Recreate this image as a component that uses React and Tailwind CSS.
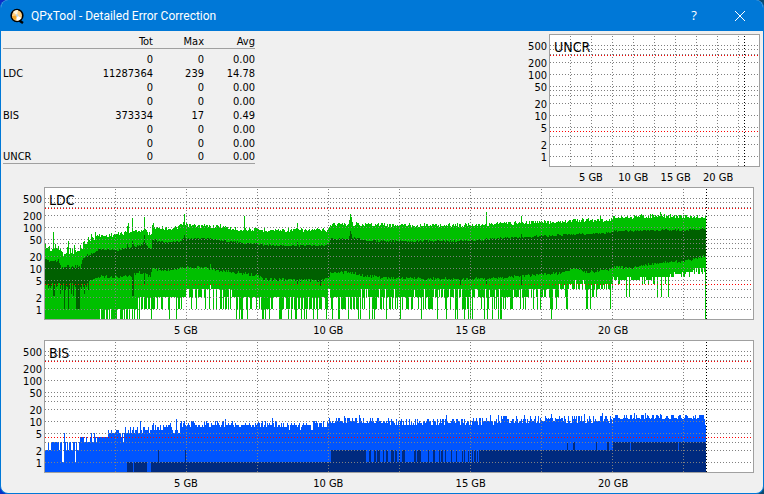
import React from 'react';

const STATS = [
  { name: '', tot: '0', max: '0', avg: '0.00' },
  { name: 'LDC', tot: '11287364', max: '239', avg: '14.78' },
  { name: '', tot: '0', max: '0', avg: '0.00' },
  { name: '', tot: '0', max: '0', avg: '0.00' },
  { name: 'BIS', tot: '373334', max: '17', avg: '0.49' },
  { name: '', tot: '0', max: '0', avg: '0.00' },
  { name: '', tot: '0', max: '0', avg: '0.00' },
  { name: 'UNCR', tot: '0', max: '0', avg: '0.00' }
];

// Plot geometry
const PLOT_H = 131;
const DISC_GB = 24.93;
const END_GB = 23.3;
const SAMPLES = 661;
const GRID_LEVELS = [1, 2, 3, 5, 10, 20, 30, 40, 50, 100, 200, 300, 400, 500];
const AXIS_LEVELS = [1, 2, 5, 10, 20, 50, 100, 200, 500];
const GRID_GB = [2.5, 5, 7.5, 10, 12.5, 15, 17.5, 20, 22.5];
const AXIS_GB = [5, 10, 15, 20];

// Logarithmic scale, 41 rows per decade
const toRow = (v) => (v < 1 ? PLOT_H : Math.round(121 - Math.log10(v) * 41));

const noise = (i, seed) => {
  const s = Math.sin(i * 12.9898 + seed * 78.233) * 43758.5453;
  return s - Math.floor(s);
};

// Line through [sample, row] knots with some jitter, single samples replaced by spikes
const envelope = (knots, jitter, seed, spikes = {}) => {
  const rows = [];
  let k = 0;
  for (let i = 0; i < SAMPLES; i++) {
    while (k < knots.length - 2 && i >= knots[k + 1][0]) k++;
    const [x0, y0] = knots[k];
    const [x1, y1] = knots[k + 1];
    const y = y0 + ((y1 - y0) * (i - x0)) / (x1 - x0);
    // the start of the disc is rougher
    const amount = i < 45 ? jitter * 2 : jitter;
    rows.push(spikes[i] ?? Math.round(y + (noise(i, seed) - 0.5) * amount));
  }
  return rows;
};

// Picks from a pool of counts, [first sample, pool]
const pick = (pools, seed, spikes = {}) => {
  const rows = [];
  let k = 0;
  for (let i = 0; i < SAMPLES; i++) {
    while (k < pools.length - 1 && i >= pools[k + 1][0]) k++;
    const pool = pools[k][1];
    rows.push(toRow(spikes[i] ?? pool[Math.floor(noise(i, seed) * pool.length)]));
  }
  return rows;
};

const bars = (top, bottom) =>
  top.map((y, i) => (bottom[i] > y ? `M${i} ${y}h1V${bottom[i]}h-1z` : '')).join('');

const ZERO = new Array(SAMPLES).fill(PLOT_H);

const ldcMax = envelope(
  [[0, 58], [6, 61], [14, 59], [17, 66], [21, 62], [33, 64], [37, 57], [40, 54], [45, 52], [52, 48],
    [68, 47], [82, 44], [97, 42], [103, 45], [106, 45], [107, 36], [110, 39], [128, 41], [137, 37], [155, 38],
    [175, 38], [188, 41], [212, 42], [283, 42], [285, 36], [312, 36], [345, 37], [418, 37], [468, 35],
    [502, 34], [535, 32], [565, 32], [569, 29], [615, 28], [661, 29]],
  4, 1,
  { 8: 44, 23: 53, 29: 57, 46: 46, 50: 44, 82: 38, 83: 35, 87: 30, 98: 42, 99: 29, 100: 41, 139: 26, 138: 34,
    199: 28, 200: 40, 252: 35, 304: 32, 305: 26, 306: 29, 307: 34, 441: 24, 476: 28, 555: 28, 615: 24 }
);
const ldcAvgTop = envelope(
  [[0, 73], [13, 72], [16, 79], [32, 79], [35, 80], [37, 71], [42, 68], [48, 65], [55, 61], [72, 62], [82, 60],
    [97, 57], [102, 58], [106, 61], [107, 51], [115, 54], [135, 54], [137, 51], [158, 50], [182, 53], [198, 55],
    [222, 57], [245, 58], [283, 57], [285, 51], [312, 50], [322, 53], [412, 53], [438, 52], [441, 51], [482, 49],
    [515, 47], [566, 45], [569, 43], [615, 42], [642, 42], [661, 41]],
  2, 2,
  { 82: 56, 87: 53, 88: 56, 98: 54, 99: 47, 100: 55, 139: 47, 165: 50, 252: 54, 304: 48, 305: 43, 306: 46, 476: 46 }
);
const ldcAvgBottom = envelope(
  [[0, 97], [35, 98], [42, 98], [45, 93], [55, 88], [72, 89], [88, 87], [93, 84], [105, 88], [107, 80],
    [118, 83], [137, 79], [158, 79], [175, 83], [195, 85], [213, 88], [217, 91], [252, 92], [275, 93], [283, 90],
    [285, 85], [302, 84], [321, 88], [345, 90], [415, 91], [452, 90], [492, 87], [515, 85], [525, 82], [531, 80],
    [540, 84], [565, 82], [568, 79], [586, 80], [606, 76], [625, 74], [642, 73], [652, 70], [661, 67]],
  3, 3,
  { 8: 108, 9: 108, 15: 106, 17: 102, 19: 121, 20: 102, 23: 121, 24: 102, 26: 106, 28: 108, 31: 121, 32: 121,
    33: 121, 34: 121, 39: 106, 43: 102, 87: 108, 88: 108, 99: 97, 165: 76, 252: 96, 275: 98, 415: 97, 441: 96, 476: 97 }
);
const ldcMin = pick(
  [[0, [0]], [45, [0, 0, 1, 0, 0]], [72, [0, 0, 1, 1]], [93, [2, 2, 2, 1, 1, 1, 0]], [107, [2, 2, 1, 1, 2]],
    [137, [3, 3, 2, 2, 1]], [158, [3, 3, 2, 3, 1]], [174, [2, 2, 1, 1, 3]], [190, [2, 1, 1, 2, 0]],
    [213, [1, 1, 2, 1, 0, 2, 0]], [283, [2, 2, 1, 3, 2, 1, 0]], [345, [2, 2, 1, 1, 2, 3]],
    [410, [2, 1, 2, 1, 2, 3, 0]], [470, [3, 2, 3, 2, 1]], [500, [3, 3, 2, 4, 1]], [523, [4, 4, 3, 3, 5, 3]],
    [545, [3, 4, 4, 4, 3, 2]], [568, [5, 5, 4, 5, 5, 6]], [605, [5, 5, 6, 6, 4]], [625, [6, 7, 7, 8, 6]],
    [645, [7, 9, 8, 10, 8]], [660, [0]]],
  4,
  { 94: 0, 106: 0, 124: 0, 131: 0, 165: 4, 341: 0, 355: 0, 376: 0, 392: 0, 401: 0, 427: 0, 453: 0, 506: 0,
    521: 1, 522: 1, 541: 1, 542: 1, 545: 1, 565: 1, 581: 2, 584: 2, 612: 2, 616: 2, 623: 2 }
);

const bisMax = pick(
  [[0, [2, 3, 3]], [17, [2, 2, 2, 3]], [34, [3, 3, 4]], [52, [4]], [62, [4, 5, 5]], [70, [5, 5, 6]], [76, [4, 5]],
    [80, [5, 6, 6, 7]], [92, [5, 6, 7]], [106, [6, 7, 8]], [118, [7, 8, 9]], [126, [5, 6, 7]], [135, [7, 8, 9, 10]],
    [150, [7, 8]], [158, [7, 8, 9, 10]], [185, [7, 8, 8, 9]], [212, [7, 8, 9, 10]], [235, [6, 7, 8, 9]],
    [268, [7, 8, 9, 10]], [283, [9, 10, 10, 12]], [345, [8, 9, 10, 11]], [425, [8, 10, 10, 12]],
    [450, [9, 10, 11, 13]], [495, [10, 11, 12, 13]], [520, [9, 10, 11, 13]], [568, [11, 12, 12, 14]],
    [600, [11, 12, 13, 14]], [660, [8]]],
  5,
  { 17: 1, 18: 1, 19: 5, 30: 1, 35: 4, 46: 5, 49: 5, 63: 6, 66: 6, 72: 6, 73: 6, 78: 3, 95: 10, 108: 9, 131: 11,
    139: 10, 148: 10, 180: 11, 187: 10, 227: 12, 294: 12, 299: 13, 314: 14, 318: 12, 401: 14, 445: 14, 453: 14,
    479: 14, 506: 15, 539: 15, 557: 16, 589: 16, 600: 16, 615: 15 }
);

// Samples with at least one, two and three average errors
const BIS_AVG = [
  [1, 82, 88], [1, 89, 102], [1, 106, 661],
  [2, 113, 114], [2, 140, 141], [2, 286, 321], [2, 324, 326], [2, 329, 331], [2, 332, 335], [2, 338, 339],
  [2, 341, 343], [2, 346, 349], [2, 350, 352], [2, 354, 355], [2, 357, 360], [2, 369, 371], [2, 372, 376],
  [2, 383, 384], [2, 388, 390], [2, 394, 395], [2, 396, 398], [2, 400, 401], [2, 406, 407], [2, 411, 412],
  [2, 417, 418], [2, 419, 420], [2, 423, 424], [2, 425, 426], [2, 427, 428], [2, 429, 431], [2, 432, 433],
  [2, 434, 661], [3, 522, 523], [3, 528, 530], [3, 551, 552], [3, 562, 564], [3, 568, 585], [3, 586, 633],
  [3, 634, 661]
];
const bisAvg = BIS_AVG.map(([v, from, to]) => `M${from} ${toRow(v)}H${to}V${PLOT_H}H${from}z`).join('');

const LDC_LAYERS = [
  { fill: '#00c000', d: bars(ldcMax, ldcMin) },
  { fill: '#006000', d: bars(ldcAvgTop, ldcAvgBottom) }
];
const BIS_LAYERS = [
  { fill: '#0055ff', d: bars(bisMax, ZERO) },
  { fill: '#002a7f', d: bisAvg }
];

function Chart({ title, layers = [], span = 708 }) {
  const column = (gb) => Math.round((gb / DISC_GB) * span) - 0.5;

  return (
    <figure className="grid grid-cols-[43px_1fr] grid-rows-[133px_20px] text-[11px]" aria-label={title}>
      <svg className="w-full h-full" aria-hidden="true">
        {AXIS_LEVELS.map((v) => (
          <text key={v} x="41" y={toRow(v) + 6} textAnchor="end">{v}</text>
        ))}
      </svg>

      <div className="relative border border-[#a0a0a0] bg-white">
        <svg
          className="block w-full h-full"
          viewBox={`0 0 ${span} ${PLOT_H}`}
          preserveAspectRatio="none"
          shapeRendering="crispEdges"
        >
          {layers.map((layer) => (
            <path key={layer.fill} d={layer.d} fill={layer.fill} />
          ))}
          <g stroke="#808080" strokeDasharray="1 2">
            {GRID_LEVELS.map((v) => (
              <line key={v} x1="0" x2={span} y1={toRow(v) + 0.5} y2={toRow(v) + 0.5} />
            ))}
            {GRID_GB.map((gb) => (
              <line key={gb} x1={column(gb)} x2={column(gb)} y1="1" y2={PLOT_H} />
            ))}
          </g>
          {/* Quality limits */}
          <g stroke="#ff0000" strokeDasharray="1 2">
            <line x1="0" x2={span} y1="20.5" y2="20.5" />
            <line x1="0" x2={span} y1="96.5" y2="96.5" />
          </g>
          <line x1={column(END_GB)} x2={column(END_GB)} y1="1" y2={PLOT_H} stroke="#000000" strokeDasharray="1 2" />
        </svg>
        <figcaption className="absolute left-1 top-1 text-[14px] leading-4">{title}</figcaption>
      </div>

      <svg className="col-start-2 w-full h-full overflow-visible" aria-hidden="true">
        {AXIS_GB.map((gb) => (
          <text key={gb} x={`${(column(gb) / span) * 100}%`} y="14" textAnchor="middle">{gb} GB</text>
        ))}
      </svg>
    </figure>
  );
}

function StatsTable() {
  return (
    <table className="ml-0.5 w-[252px] table-fixed border-separate border-spacing-0 text-right text-[11px] leading-3">
      <thead>
        <tr className="h-[15px] align-bottom">
          <th className="border-b border-[#a0a0a0]" aria-label="Error" />
          <th className="w-[70px] border-b border-[#a0a0a0] font-normal">Tot</th>
          <th className="w-[51px] border-b border-[#a0a0a0] font-normal">Max</th>
          <th className="w-[51px] border-b border-[#a0a0a0] font-normal">Avg</th>
        </tr>
        <tr className="h-[3px]" />
      </thead>
      <tbody className="[&>tr:last-child>*]:border-b [&>tr>*]:border-[#a0a0a0]">
        {STATS.map((row, i) => (
          <tr key={i} className="h-[14px] align-bottom">
            <th className="text-left font-normal">{row.name}</th>
            <td>{row.tot}</td>
            <td>{row.max}</td>
            <td>{row.avg}</td>
          </tr>
        ))}
      </tbody>
    </table>
  );
}

function TitleBar() {
  return (
    <header className="flex h-[31px] items-center bg-[#0078d7] pl-2 text-white">
      <svg width="16" height="16" viewBox="0 0 16 16" aria-hidden="true">
        <path d="M9.500 12l4.500 3" stroke="#000" strokeWidth="2.500" />
        <ellipse cx="8" cy="7.500" rx="5.800" ry="6" fill="#ffcf80" stroke="#000" strokeWidth="1.600" />
        <path d="M8 7.500L4 4q2-2.500 5-2z" fill="#fff6dc" />
        <path d="M8 7.500l4.500 2.500q-2 3-5 2.800z" fill="#fff" />
        <path d="M8 7.500L3.200 8q.5 3 3 4.500z" fill="#f5a623" />
        <circle cx="8" cy="7.500" r="1.300" fill="#b8d4e8" />
      </svg>
      <h1 className="ml-1.5 flex-1 font-['Roboto','Open_Sans',sans-serif] text-[12px] leading-4">
        QPxTool - Detailed Error Correction
      </h1>
      <button className="flex h-full w-[46px] items-center justify-center font-['Open_Sans',sans-serif] text-[13px]" aria-label="Help">?</button>
      <button className="flex h-full w-[46px] items-center justify-center" aria-label="Close">
        <svg width="10" height="10" viewBox="0 0 10 10" stroke="#fff" fill="none">
          <path d="M0 0l10 10M10 0L0 10" />
        </svg>
      </button>
    </header>
  );
}

export default function App() {
  return (
    <div className="min-h-screen bg-linear-to-r from-[#0a30c8] to-[#0a4a70]">
      <main className="min-h-screen overflow-hidden rounded-lg border-x border-b border-[#0078d7] bg-[#f0f0f0] font-['DejaVu_Sans_Condensed','DejaVu_Sans',sans-serif] text-black">
        <TitleBar />
        <div className="flex items-start justify-between pt-[3px] pr-[3px]">
          <StatsTable />
          <div className="w-[254px]">
            <Chart title="UNCR" span={209} />
          </div>
        </div>
        <div className="pr-[9px]">
          <Chart title="LDC" layers={LDC_LAYERS} />
          <Chart title="BIS" layers={BIS_LAYERS} />
        </div>
      </main>
    </div>
  );
}
